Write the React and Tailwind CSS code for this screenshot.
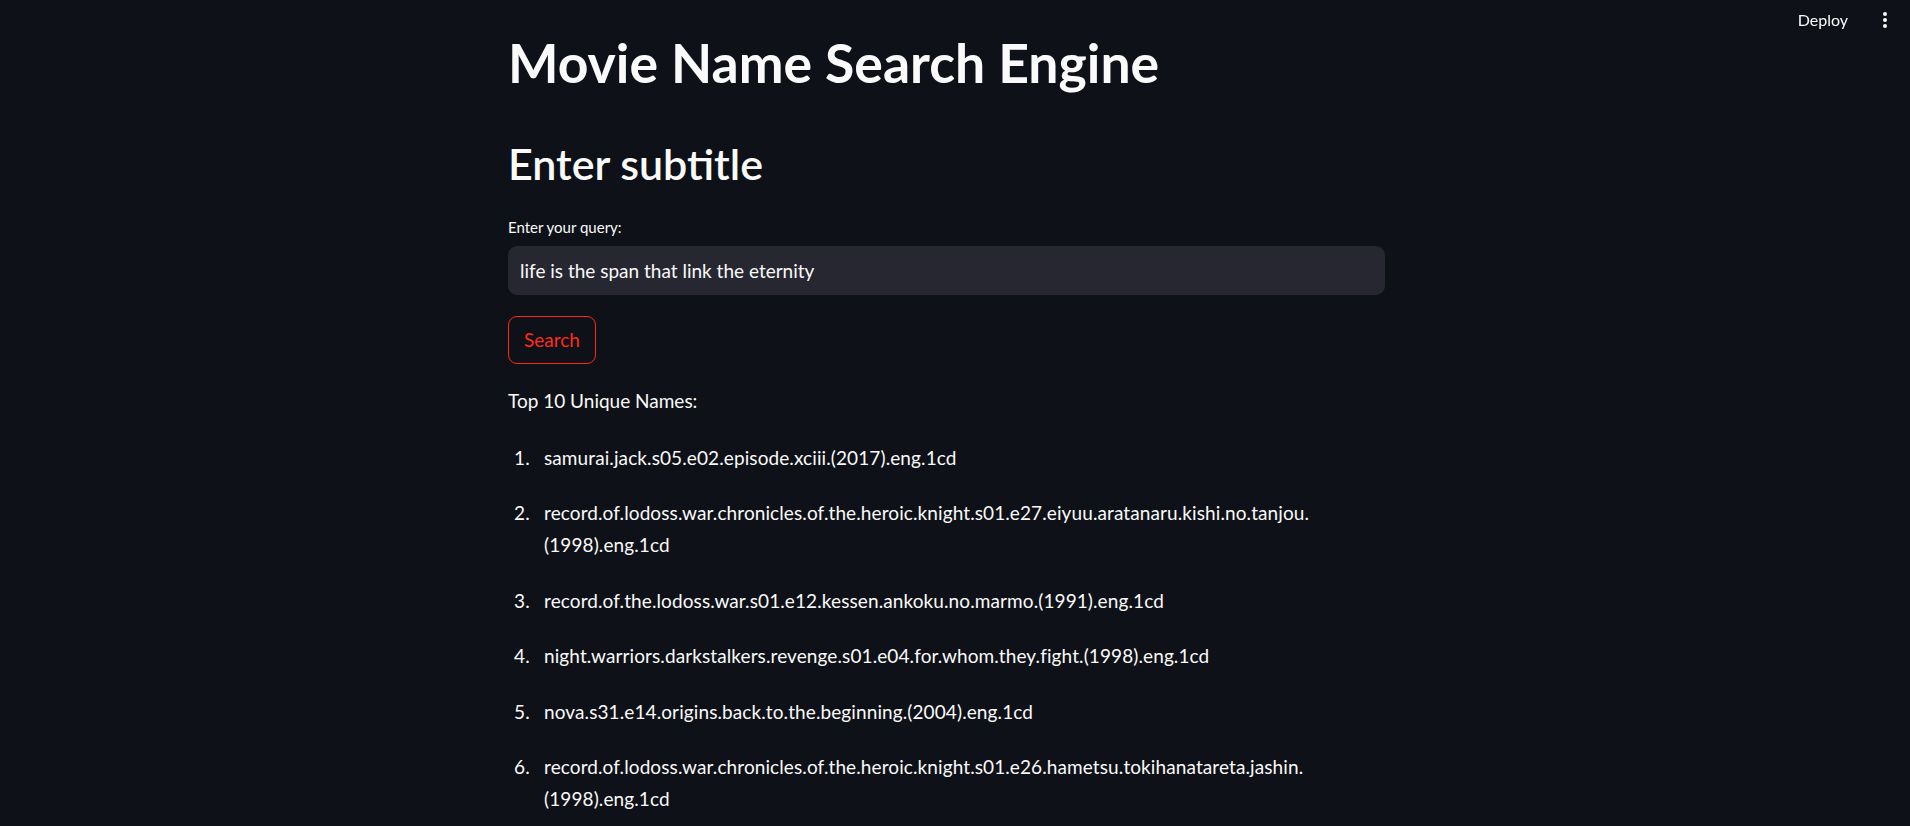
import React from 'react';

const results = [
    'samurai.jack.s05.e02.episode.xciii.(2017).eng.1cd',
    'record.of.lodoss.war.chronicles.of.the.heroic.knight.s01.e27.eiyuu.aratanaru.kishi.no.tanjou.(1998).eng.1cd',
    'record.of.the.lodoss.war.s01.e12.kessen.ankoku.no.marmo.(1991).eng.1cd',
    'night.warriors.darkstalkers.revenge.s01.e04.for.whom.they.fight.(1998).eng.1cd',
    'nova.s31.e14.origins.back.to.the.beginning.(2004).eng.1cd',
    'record.of.lodoss.war.chronicles.of.the.heroic.knight.s01.e26.hametsu.tokihanatareta.jashin.(1998).eng.1cd',
];

const App = () => {
    return (
        <div className="min-h-screen bg-[#0e1117] text-[#fafafa] font-['Lato','Noto_Sans',sans-serif] overflow-hidden">
            {/* toolbar */}
            <header className="fixed top-0 right-0 h-[40px] flex items-center pr-[22px]">
                <button className="text-[16px] text-[#fafafa] mr-[34px]">Deploy</button>
                <svg width="6" height="18" viewBox="0 0 6 18" className="fill-[#fafafa]">
                    <circle cx="3" cy="3" r="2" />
                    <circle cx="3" cy="9" r="2" />
                    <circle cx="3" cy="15" r="2" />
                </svg>
            </header>

            <main className="w-[877px] ml-[508px] pt-[30px]">
                <h1 className="text-[53.5px] font-bold leading-[1.2]">
                    Movie Name Search Engine
                </h1>
                <h2 className="text-[43px] font-semibold leading-[1.2] mt-[44px]">
                    Enter subtitle
                </h2>

                <label className="block text-[15px] mt-[26px]">Enter your query:</label>
                <div className="mt-[8px] h-[49px] bg-[#262730] rounded-[9px] flex items-center px-[12px] text-[19px]">
                    life is the span that link the eternity
                </div>

                <button className="mt-[21px] h-[48px] px-[15px] rounded-[9px] border border-[#ff2b17] text-[#ff2b17] text-[19px]">
                    Search
                </button>

                <p className="mt-[23px] text-[19px]">Top 10 Unique Names:</p>

                <ol className="mt-[26px] text-[19px] leading-[32px] tracking-[0.1px] space-y-[23.5px]">
                    {results.map((name, i) => (
                        <li key={i} className="flex pl-[6px]">
                            <span className="w-[30px] shrink-0">{i + 1}.</span>
                            <span className="min-w-0 break-words">{name}</span>
                        </li>
                    ))}
                </ol>
            </main>
        </div>
    );
};

export default App;
